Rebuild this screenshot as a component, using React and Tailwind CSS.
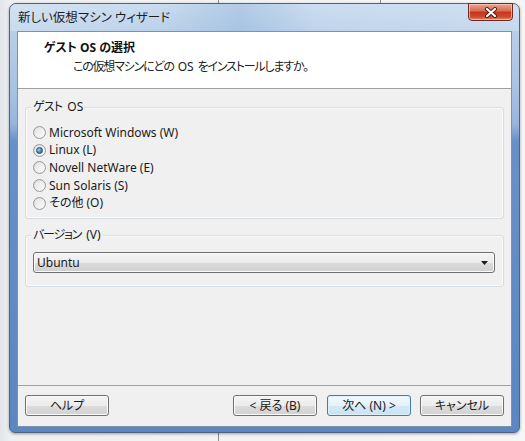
import React from "react";

const font = "font-['Noto_Sans','Noto_Sans_CJK_JP',sans-serif] [font-feature-settings:'palt']";

function Radio({ checked }) {
  return (
    <span className="relative flex h-[13px] w-[13px] items-center justify-center rounded-full border border-[#9a9a9a] bg-[linear-gradient(135deg,#d8d8d8,#f8f8f8)]">
      <span className="h-[9px] w-[9px] rounded-full bg-[linear-gradient(135deg,#e4e4e4,#fbfbfb)]" />
      {checked && (
        <span className="absolute h-[7px] w-[7px] rounded-full border border-[#1d4f73] bg-[radial-gradient(circle_at_35%_35%,#9ad8f4,#2a7fb0_65%,#155a88)]" />
      )}
    </span>
  );
}

function Btn({ children, focused, className = "" }) {
  return (
    <div
      className={
        "flex h-[21px] w-[84px] items-center justify-center rounded-[3px] border text-[12px] text-[#1a1a1a] " +
        (focused
          ? "border-[#3c7fb1] bg-[linear-gradient(#f3f9fd,#e5f2fa_50%,#d3e9f7_51%,#c9e3f5)] shadow-[inset_0_0_0_1px_#dff0fb] "
          : "border-[#707070] bg-[linear-gradient(#f4f4f4,#ececec_50%,#dcdcdc_51%,#d2d2d2)] shadow-[inset_0_0_0_1px_#fbfbfb] ") +
        className
      }
    >
      {children}
    </div>
  );
}

export default function App() {
  const items = [
    ["Microsoft Windows (W)", false],
    ["Linux (L)", true],
    ["Novell NetWare (E)", false],
    ["Sun Solaris (S)", false],
    ["その他 (O)", false],
  ];
  return (
    <div className={"relative h-[441px] w-[525px] overflow-hidden bg-[linear-gradient(90deg,#e2e5e9,#eef0f2_2%,#f6f6f6)] " + font}>
      {/* desktop details behind window */}
      <div className="absolute left-[218px] top-0 h-[441px] w-px bg-[#8a8a8a]" />
      <div className="absolute left-[380px] top-0 h-[8px] w-px bg-[#8a8a8a]" />

      {/* window */}
      <div className="relative ml-[9px] mt-[3px] flex h-[430px] w-[511px] flex-col rounded-t-[7px] rounded-b-[6px] border border-[#52627a] bg-[linear-gradient(180deg,#c6d9ee_0%,#b8cfe9_6%,#a9c2e2_20%,#97b5dc_28%,#6890c8_32%,#5b86c2_100%)] shadow-[0_1px_3px_rgba(0,0,0,0.35)]">
        {/* title bar */}
        <div className="flex h-[27px] items-start justify-between rounded-t-[6px] bg-[linear-gradient(90deg,rgba(255,255,255,0.25),rgba(255,255,255,0.05)_30%,rgba(120,160,210,0.25)_45%,rgba(255,255,255,0.1)_60%,rgba(255,255,255,0.2))]">
          <div className="pl-[8px] pt-[5px] text-[12.5px] leading-[18px] text-[#1e1e1e]">新しい仮想マシン ウィザード</div>
          <div className="mr-[6px] mt-[-1px] flex h-[18px] w-[45px] items-center justify-center rounded-b-[4px] border border-[#6b2a22] bg-[linear-gradient(#e8a493,#d8694f_45%,#c7321a_50%,#cf4a2d_80%,#e08a6c)] shadow-[inset_0_0_0_1px_rgba(255,220,210,0.6)]">
            <svg width="14" height="11" viewBox="0 0 14 11">
              <path d="M3 2 L11 9 M11 2 L3 9" stroke="#4a1a14" strokeWidth="4" strokeLinecap="round" />
              <path d="M3 2 L11 9 M11 2 L3 9" stroke="#ffffff" strokeWidth="2.2" strokeLinecap="round" />
            </svg>
          </div>
        </div>

        {/* client area */}
        <div className="mx-[7px] flex h-[396px] flex-col border border-[#7d91ab] bg-[#f0f0f0] text-[12px] text-[#1a1a1a]">
          {/* header */}
          <div className="flex h-[57px] flex-col border-b border-[#a0a0a0] bg-white">
            <div className="pl-[26px] pt-[8px] text-[12px] font-bold leading-[16px] text-[#111]">ゲスト OS の選択</div>
            <div className="pl-[55px] pt-[3px] text-[12px] leading-[16px] text-[#222]">
              <span className="tracking-[-1.2px]">この仮想マシンにどの</span>
              <span className="inline-block px-[4px]">OS</span>
              <span className="tracking-[-1.2px]">をインストールしますか。</span>
            </div>
          </div>

          {/* body */}
          <div className="flex flex-1 flex-col px-[7px]">
            {/* group 1 */}
            <div className="relative mt-[18px] h-[112px] rounded-[3px] border border-[#d5dfe5] shadow-[inset_0_0_0_1px_#fafafa]">
              <div className="absolute left-[5px] top-[-9px] flex bg-[#f0f0f0] px-[2px] leading-[16px]">
                <span className="tracking-[-0.8px]">ゲスト</span><span className="pl-[5px]">OS</span>
              </div>
              <div className="flex flex-col pl-[7px] pt-[16px]">
                {items.map(([label, checked]) => (
                  <div key={label} className="flex h-[17.6px] items-center gap-[3px]">
                    <Radio checked={checked} />
                    <span className="leading-[16px]">{label}</span>
                  </div>
                ))}
              </div>
            </div>

            {/* group 2 */}
            <div className="relative mt-[16px] h-[52px] rounded-[3px] border border-[#d5dfe5] shadow-[inset_0_0_0_1px_#fafafa]">
              <div className="absolute left-[5px] top-[-9px] flex bg-[#f0f0f0] px-[2px] leading-[16px]">
                <span className="tracking-[-1.2px]">バージョン</span><span className="pl-[5px]">(V)</span>
              </div>
              <div className="ml-[7px] mr-[8px] mt-[16px] flex h-[21px] items-center justify-between rounded-[3px] border border-[#707070] bg-[linear-gradient(#f4f4f4,#ececec_50%,#dcdcdc_51%,#cfcfcf)] pl-[3px] pr-[6px] shadow-[inset_0_0_0_1px_#fafafa]">
                <span className="leading-[16px]">Ubuntu</span>
                <svg width="7" height="4" viewBox="0 0 7 4">
                  <path d="M0 0 H7 L3.5 4 Z" fill="#1a1a1a" />
                </svg>
              </div>
            </div>
            <div className="flex-1" />
          </div>

          {/* footer */}
          <div className="flex h-[41px] items-start border-t border-[#a0a0a0] px-[7px] pt-[9px]">
            <Btn>ヘルプ</Btn>
            <div className="flex-1" />
            <Btn>&lt; 戻る (B)</Btn>
            <Btn focused className="ml-[10px]">次へ (N) &gt;</Btn>
            <Btn className="ml-[9px]">キャンセル</Btn>
          </div>
        </div>
      </div>
    </div>
  );
}
